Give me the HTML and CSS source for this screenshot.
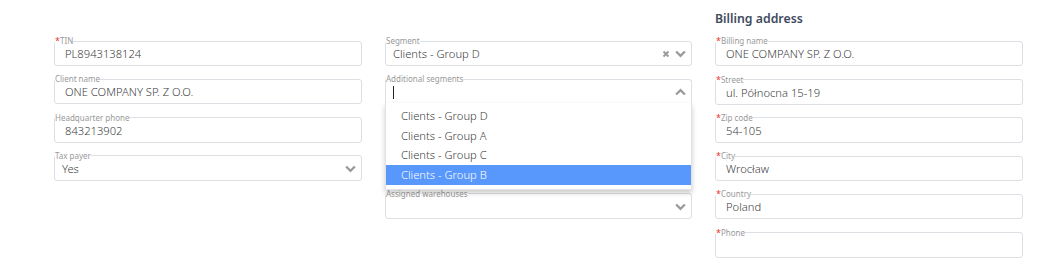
FILE: index.html
```html
<!DOCTYPE html>
<html>

  <head>
    <meta charset="UTF-8">
    <title>Client</title>
    <link rel="stylesheet" href="styles.css">
  </head>

  <body>
    <div id="form">
      <div class="col">
        <fieldset class="field">
          <legend><span class="req">*</span>TIN</legend>
          <div class="value">PL8943138124</div>
        </fieldset>
        <fieldset class="field">
          <legend>Client name</legend>
          <div class="value">ONE COMPANY SP. Z O.O.</div>
        </fieldset>
        <fieldset class="field">
          <legend>Headquarter phone</legend>
          <div class="value">843213902</div>
        </fieldset>
        <fieldset class="field select">
          <legend>Tax payer</legend>
          <div class="value">Yes</div>
          <span class="icons">
            <svg class="chev" viewBox="0 0 10 7"><path d="M1 1.2 5 5.2 9 1.2" /></svg>
          </span>
        </fieldset>
      </div>

      <div class="col">
        <fieldset class="field select">
          <legend>Segment</legend>
          <div class="value">Clients - Group D</div>
          <span class="icons">
            <svg class="clear" viewBox="0 0 8 8"><path d="M1.5 1.5 6.5 6.5M6.5 1.5 1.5 6.5" /></svg>
            <svg class="chev" viewBox="0 0 10 7"><path d="M1 1.2 5 5.2 9 1.2" /></svg>
          </span>
        </fieldset>
        <div class="multi">
          <fieldset class="field select open">
            <legend>Additional segments</legend>
            <div class="value"><span class="caret"></span></div>
            <span class="icons">
              <svg class="chev" viewBox="0 0 10 7"><path d="M1 5.8 5 1.8 9 5.8" /></svg>
            </span>
          </fieldset>
          <ul class="menu">
            <li>Clients - Group D</li>
            <li>Clients - Group A</li>
            <li>Clients - Group C</li>
            <li class="active">Clients - Group B</li>
          </ul>
        </div>
        <fieldset class="field select">
          <legend>Assigned warehouses</legend>
          <div class="value"></div>
          <span class="icons">
            <svg class="chev" viewBox="0 0 10 7"><path d="M1 1.2 5 5.2 9 1.2" /></svg>
          </span>
        </fieldset>
      </div>

      <div class="col">
        <h3>Billing address</h3>
        <fieldset class="field">
          <legend><span class="req">*</span>Billing name</legend>
          <div class="value">ONE COMPANY SP. Z O.O.</div>
        </fieldset>
        <fieldset class="field">
          <legend><span class="req">*</span>Street</legend>
          <div class="value">ul. Północna 15-19</div>
        </fieldset>
        <fieldset class="field">
          <legend><span class="req">*</span>Zip code</legend>
          <div class="value">54-105</div>
        </fieldset>
        <fieldset class="field">
          <legend><span class="req">*</span>City</legend>
          <div class="value">Wrocław</div>
        </fieldset>
        <fieldset class="field">
          <legend><span class="req">*</span>Country</legend>
          <div class="value">Poland</div>
        </fieldset>
        <fieldset class="field">
          <legend><span class="req">*</span>Phone</legend>
          <div class="value"></div>
        </fieldset>
      </div>
    </div>
  </body>

</html>
```

FILE: styles.css
```css
body {
  margin: 0;
  background: #fff;
  font-family: "Noto Sans", "Open Sans", sans-serif;
  color: #404040;
}

#form {
  display: grid;
  grid-template-columns: 308px 307px 308px;
  column-gap: 23px;
  padding: 37px 0 0 54px;
}

.col {
  display: flex;
  flex-direction: column;
  gap: 9.3px;
}

.col h3 {
  margin: -28px 0 0;
  height: 19px;
  font-size: 12.3px;
  line-height: 19px;
  font-weight: 600;
  color: #3f4b5e;
}

.field {
  position: relative;
  margin: 0;
  padding: 0 0 2px 10px;
  border: 1px solid #dcdfe3;
  border-radius: 3px;
  min-width: 0;
}

.field legend {
  margin-left: -10px;
  padding: 0;
  font-size: 8px;
  line-height: 8px;
  color: #999;
}

.req {
  color: #e53935;
  font-size: 9px;
}

.value {
  height: 18px;
  font-size: 11.2px;
  line-height: 18px;
  font-weight: 300;
  white-space: nowrap;
}

.select {
  padding-left: 7px;
}

.select legend {
  margin-left: -7px;
}

.icons {
  position: absolute;
  right: 5px;
  top: 5px;
  display: flex;
  align-items: center;
  gap: 5px;
}

.chev {
  width: 11px;
  height: 8px;
  fill: none;
  stroke: #999;
  stroke-width: 2;
}

.clear {
  width: 8px;
  height: 8px;
  fill: none;
  stroke: #999;
  stroke-width: 1.8;
}

.caret {
  display: inline-block;
  width: 1px;
  height: 13px;
  margin-top: 3px;
  vertical-align: top;
  background: #222;
}

.multi {
  position: relative;
  height: 105px;
}

.open {
  border-bottom-color: transparent;
  border-radius: 3px 3px 0 0;
}

.menu {
  position: absolute;
  left: 0;
  right: 0;
  top: 28px;
  z-index: 2;
  margin: 0;
  padding: 3px 0 4px;
  list-style: none;
  background: #fff;
  border: 1px solid #e2e2e2;
  border-top: none;
  box-shadow: 0 3px 5px rgba(0, 0, 0, 0.2);
}

.menu li {
  height: 19.6px;
  padding-left: 15px;
  font-size: 11.2px;
  line-height: 19.6px;
  font-weight: 300;
  color: #404040;
}

.menu li.active {
  background: #5897fb;
  color: #fff;
}
```
